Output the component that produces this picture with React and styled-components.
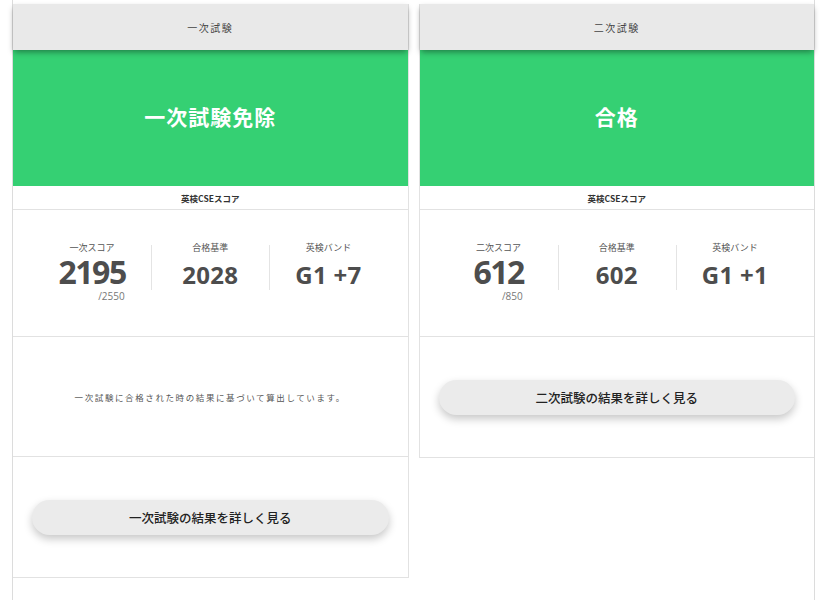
import React from 'react'
import styled, { createGlobalStyle } from 'styled-components'

const GlobalStyle = createGlobalStyle`
  * { box-sizing: border-box; }
  body {
    margin: 0;
    background: #fff;
    font-family: "Noto Sans CJK JP", "Noto Sans", sans-serif;
    color: #444;
  }
`

const results = [
  {
    key: 'first',
    title: '一次試験',
    status: '一次試験免除',
    stats: [
      { label: '一次スコア', value: '2195', sub: '/2550' },
      { label: '合格基準', value: '2028' },
      { label: '英検バンド', value: 'G1 +7' },
    ],
    note: '一次試験に合格された時の結果に基づいて算出しています。',
    button: '一次試験の結果を詳しく見る',
  },
  {
    key: 'second',
    title: '二次試験',
    status: '合格',
    stats: [
      { label: '二次スコア', value: '612', sub: '/850' },
      { label: '合格基準', value: '602' },
      { label: '英検バンド', value: 'G1 +1' },
    ],
    button: '二次試験の結果を詳しく見る',
  },
]

export default function App() {
  return (
    <>
      <GlobalStyle />
      <Page>
        <Grid>
          {results.map((r) => (
            <Card key={r.key}>
              <Header>{r.title}</Header>
              <Status>{r.status}</Status>
              <Caption>英検CSEスコア</Caption>
              <Scores>
                {r.stats.map((s, i) => (
                  <Stat key={s.label} $divider={i > 0}>
                    <Label>{s.label}</Label>
                    <ValueBox>
                      <Value $main={i === 0}>{s.value}</Value>
                      {s.sub && <Sub>{s.sub}</Sub>}
                    </ValueBox>
                  </Stat>
                ))}
              </Scores>
              {r.note && <Note>{r.note}</Note>}
              <Action>
                <DetailButton>{r.button}</DetailButton>
              </Action>
            </Card>
          ))}
        </Grid>
      </Page>
    </>
  )
}

const Page = styled.div`
  margin-left: 12px;
  width: 803px;
  min-height: 600px;
  padding-top: 4px;
  border-left: 1px solid #dcdcdc;
  border-right: 1px solid #dcdcdc;
`

const Grid = styled.div`
  display: grid;
  grid-template-columns: 1fr 1fr;
  column-gap: 10px;
  align-items: start;

  & > div:first-child {
    border-right: 1px solid #e2e2e2;
  }
  & > div:last-child {
    border-left: 1px solid #e2e2e2;
  }
`

const Card = styled.div`
  display: flex;
  flex-direction: column;
  border-bottom: 1px solid #e2e2e2;
`

const Header = styled.div`
  position: relative;
  z-index: 1;
  height: 46px;
  display: flex;
  align-items: center;
  justify-content: center;
  background: #e9e9e9;
  font-size: 10px;
  letter-spacing: 1.5px;
  color: #444;
  box-shadow: 0 3px 6px -1px rgba(0, 0, 0, 0.4);
`

const Status = styled.div`
  height: 136px;
  display: flex;
  align-items: center;
  justify-content: center;
  padding-bottom: 5px;
  background: #35d073;
  color: #fff;
  font-size: 21px;
  font-weight: 700;
  letter-spacing: 1px;
`

const Caption = styled.div`
  height: 24px;
  display: flex;
  align-items: center;
  justify-content: center;
  font-size: 8.5px;
  font-weight: 700;
  color: #333;
  border-bottom: 1px solid #e2e2e2;
`

const Scores = styled.div`
  display: flex;
  padding: 31px 20px 33px;
  border-bottom: 1px solid #e2e2e2;
`

const Stat = styled.div`
  position: relative;
  flex: 1;
  display: flex;
  flex-direction: column;
  align-items: center;

  &::before {
    content: '';
    display: ${(p) => (p.$divider ? 'block' : 'none')};
    position: absolute;
    left: 0;
    top: 4px;
    height: 45px;
    border-left: 1px solid #e4e4e4;
  }
`

const Label = styled.div`
  font-size: 9px;
  color: #555;
  line-height: 14px;
`

const ValueBox = styled.div`
  display: flex;
  flex-direction: column;
  align-items: flex-end;
`

/* the headline score is drawn larger; the others sit on its baseline */
const Value = styled.div`
  font-family: "Open Sans", "Liberation Sans", sans-serif;
  font-size: ${(p) => (p.$main ? '32px' : '24px')};
  line-height: 34px;
  margin-top: ${(p) => (p.$main ? '0' : '3px')};
  font-weight: 700;
  color: #4d4d4d;
  letter-spacing: ${(p) => (p.$main ? '-1.5px' : '0.3px')};
`

const Sub = styled.div`
  font-family: "Open Sans", sans-serif;
  font-size: 10px;
  color: #777;
  line-height: 14px;
  margin-right: 1px;
`

const Note = styled.div`
  height: 120px;
  display: flex;
  align-items: center;
  justify-content: center;
  font-size: 8.5px;
  letter-spacing: 1.6px;
  color: #555;
  border-bottom: 1px solid #e2e2e2;
`

const Action = styled.div`
  height: 120px;
  display: flex;
  align-items: center;
  justify-content: center;
  padding: 0 19px;
`

const DetailButton = styled.button`
  width: 100%;
  height: 35px;
  border: none;
  border-radius: 18px;
  background: #ebebeb;
  box-shadow: 0 4px 8px rgba(0, 0, 0, 0.22);
  font-family: "Noto Sans CJK JP", sans-serif;
  font-size: 12.5px;
  font-weight: 500;
  color: #222;
  cursor: pointer;
`
